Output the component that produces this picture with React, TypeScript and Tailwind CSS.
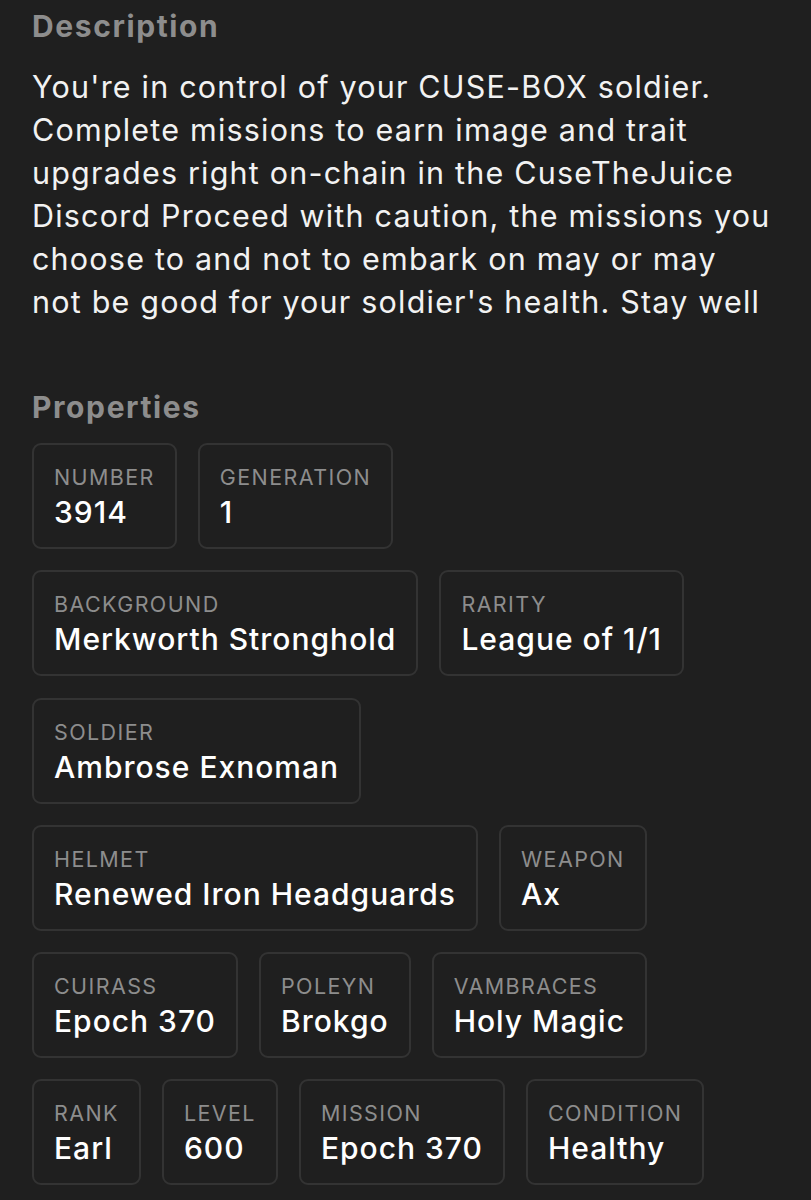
import React from "react";

type Trait = { label: string; value: string };

const rows: Trait[][] = [
  [
    { label: "Number", value: "3914" },
    { label: "Generation", value: "1" },
  ],
  [
    { label: "Background", value: "Merkworth Stronghold" },
    { label: "Rarity", value: "League of 1/1" },
  ],
  [{ label: "Soldier", value: "Ambrose Exnoman" }],
  [
    { label: "Helmet", value: "Renewed Iron Headguards" },
    { label: "Weapon", value: "Ax" },
  ],
  [
    { label: "Cuirass", value: "Epoch 370" },
    { label: "Poleyn", value: "Brokgo" },
    { label: "Vambraces", value: "Holy Magic" },
  ],
  [
    { label: "Rank", value: "Earl" },
    { label: "Level", value: "600" },
    { label: "Mission", value: "Epoch 370" },
    { label: "Condition", value: "Healthy" },
  ],
];

const description = [
  "You're in control of your CUSE-BOX soldier.",
  "Complete missions to earn image and trait",
  "upgrades right on-chain in the CuseTheJuice",
  "Discord Proceed with caution, the missions you",
  "choose to and not to embark on may or may",
  "not be good for your soldier's health. Stay well",
];

function TraitCard({ trait }: { trait: Trait }) {
  return (
    <div className="flex h-[106px] flex-col justify-center rounded-[9px] border-2 border-[#333333] px-[20px]">
      <div className="text-[21.5px] uppercase leading-[28px] tracking-[1.4px] text-[#8d8d8d]">{trait.label}</div>
      <div className="mt-[4px] text-[30px] font-medium leading-[34px] tracking-[1px] text-white">{trait.value}</div>
    </div>
  );
}

export default function App() {
  return (
    <div className="min-h-screen bg-[#1f1f1f] px-[32px] pt-[6px] font-['Inter',sans-serif] text-white">
      <h2 className="text-[30px] font-bold leading-[40px] tracking-[1.6px] text-[#8d8d8d]">Description</h2>
      <p className="mt-[19px] whitespace-nowrap text-[30.5px] leading-[43px] tracking-[1.2px] text-[#f2f2f2]">
        {description.map((line) => (
          <span key={line} className="block">
            {line}
          </span>
        ))}
      </p>

      <h2 className="mt-[64px] text-[30px] font-bold leading-[40px] tracking-[1.6px] text-[#8d8d8d]">Properties</h2>
      <div className="mt-[16px] flex flex-col gap-[21.3px]">
        {rows.map((row, i) => (
          <div key={i} className="flex gap-[21px]">
            {row.map((t) => (
              <TraitCard key={t.label} trait={t} />
            ))}
          </div>
        ))}
      </div>
    </div>
  );
}
